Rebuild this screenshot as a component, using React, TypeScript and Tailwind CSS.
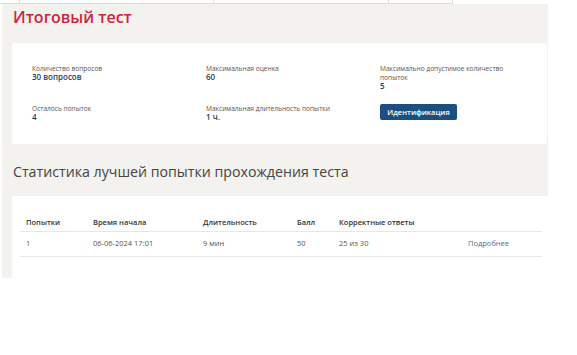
import React from "react";

const font = { fontFamily: '"Open Sans", "Noto Sans", sans-serif' };

function Info({ label, value }: { label: React.ReactNode; value: string }) {
  return (
    <div className="flex flex-col">
      <div className="text-[6.6px] leading-[9px] text-[#555]">{label}</div>
      <div className="text-[8px] leading-[8px] font-semibold text-[#1f3d63]">{value}</div>
    </div>
  );
}

export default function App() {
  const cols = "grid grid-cols-[67px_110px_94px_42px_129px_80px]";
  return (
    <div className="w-[577px] h-[355px] bg-white overflow-hidden" style={font}>
      <div className="flex w-[453px] h-[4px] border-b border-[#dddddd]">
        <div className="w-[20px] border-r border-[#dddddd]" />
        <div className="w-[194px] border-r border-[#dddddd]" />
        <div className="w-[175px] border-r border-[#dddddd]" />
        <div className="w-[64px] border-r border-[#dddddd]" />
      </div>
      <div className="ml-[2px] w-[546px] bg-[#f3f2ef] pt-[3px]">
        <h1 className="pl-[11px] text-[16px] leading-[20px] font-semibold text-[#d4213f]">
          Итоговый тест
        </h1>
        <div className="mt-[16px] ml-[10px] w-[535px] bg-white rounded-[3px] pl-[20px] pt-[21px] pb-[23px]">
          <div className="grid grid-cols-[174px_174px_174px] gap-y-[14px]">
            <Info label="Количество вопросов" value="30 вопросов" />
            <Info label="Максимальная оценка" value="60" />
            <Info
              label={
                <>
                  Максимально допустимое количество
                  <br />
                  попыток
                </>
              }
              value="5"
            />
            <Info label="Осталось попыток" value="4" />
            <Info label="Максимальная длительность попытки" value="1 ч." />
            <div className="flex">
              <button className="block w-[77px] h-[16px] rounded-[2px] bg-[#1c4f81] text-white text-[7.5px] font-semibold leading-[16px]">
                Идентификация
              </button>
            </div>
          </div>
        </div>
        <h2 className="mt-[18px] pl-[11px] text-[14.2px] leading-[20px] text-[#444]">
          Статистика лучшей попытки прохождения теста
        </h2>
        <div className="mt-[14px] ml-[10px] w-[565px] bg-white pl-[8px] pt-[18px] pb-[21px]">
          <div className="w-[522px]">
            <div className={`${cols} h-[18px] items-center border-b border-[#e6e6e6] text-[7.5px] font-semibold text-[#333]`}>
              <div className="pl-[6px]">Попытки</div>
              <div className="pl-[6px]">Время начала</div>
              <div className="pl-[6px]">Длительность</div>
              <div className="pl-[6px]">Балл</div>
              <div className="pl-[6px]">Корректные ответы</div>
              <div className="pl-[6px]" />
            </div>
            <div className={`${cols} h-[25px] items-center border-b border-[#e6e6e6] text-[7.5px] text-[#555]`}>
              <div className="pl-[6px]">1</div>
              <div className="pl-[6px]">06-06-2024 17:01</div>
              <div className="pl-[6px]">9 мин</div>
              <div className="pl-[6px]">50</div>
              <div className="pl-[6px]">25 из 30</div>
              <div className="pl-[6px] text-[#4a6e94]">Подробнее</div>
            </div>
          </div>
        </div>
      </div>
    </div>
  );
}
